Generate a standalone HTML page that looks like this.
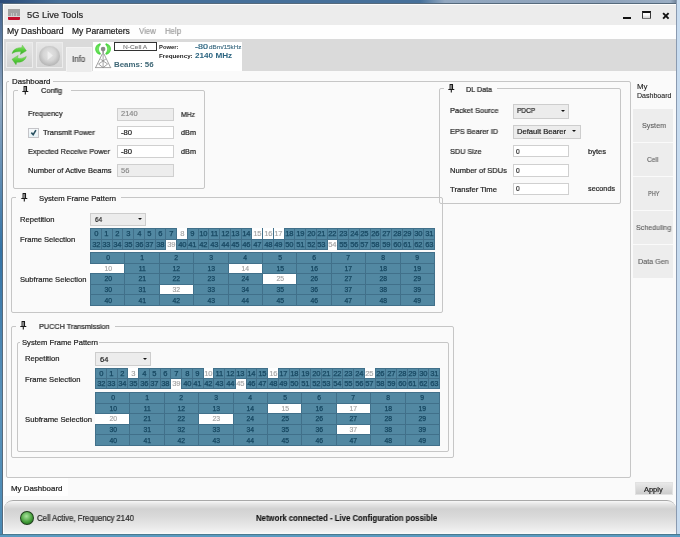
<!DOCTYPE html><html><head><meta charset="utf-8"><style>
*{margin:0;padding:0;box-sizing:border-box}
html,body{width:680px;height:537px;overflow:hidden;background:#2f6fa0;font-family:"Liberation Sans",sans-serif;color:#222}
.a{position:absolute}
.t{position:absolute;white-space:nowrap;line-height:1;transform-origin:0 0;will-change:transform}
.box{position:absolute;border:1px solid #c6c6c6;border-radius:2px}
.inp{position:absolute;border:1px solid #d0d0d0;background:#fff}
.dis{background:#ededed;border-color:#cfcfcf}
.dd{position:absolute;border:1px solid #cdcdcd;background:#ececec}
.arr{position:absolute;width:0;height:0;border-left:2.1px solid transparent;border-right:2.1px solid transparent;border-top:2.6px solid #111}
.g{position:absolute;background:#5288a2}
.gl{position:absolute;background:#41708a}
.w{position:absolute;background:#fff}
.gt{position:absolute;white-space:nowrap;line-height:1;text-align:center;color:#164862;will-change:transform;-webkit-text-stroke:0.25px #164862;transform-origin:50% 0}
.gt.wt{-webkit-text-stroke:0.15px #a0a0a0}
.pin{position:absolute}
</style></head><body>
<div class="a" style="left:0;top:0;width:680px;height:537px;background:linear-gradient(#3d5f8c 0px,#8fa8c2 100px,#3574a6 250px,#5a92ba 400px,#4a8ab5 537px)"></div>
<div class="a" style="left:0;top:0;width:680px;height:3px;background:linear-gradient(90deg,#2a4a78,#46709a 60px,#46709a 420px,#93a8c0 445px,#8ea2ba 600px,#9aaec4 670px,#5a6a80 680px)"></div>
<div class="a" style="left:676px;top:0;width:4px;height:537px;background:linear-gradient(90deg,#8a9ab0 0,#8a9ab0 1px,#c8dcf0 1px)"></div>
<div class="a" style="left:0;top:534px;width:680px;height:3px;background:linear-gradient(#4a7a90 0,#4a7a90 1px,#5a9ac0 1px)"></div>
<div class="a" style="left:2px;top:3px;width:674px;height:531px;background:#566a7c"></div>
<div class="a" style="left:3px;top:4px;width:673px;height:530px;background:#fdfdfd"></div>
<div class="a" style="left:4px;top:5px;width:672px;height:528px;background:#fafafa"></div>
<div class="a" style="left:4px;top:5px;width:672px;height:20px;background:#ececec"></div>
<div class="a" style="left:8.3px;top:9px;width:11.6px;height:8px;background:#a2a2a2"></div>
<div class="a" style="left:10.6px;top:12.5px;width:1px;height:3.5px;background:#c4c4c4"></div>
<div class="a" style="left:13.4px;top:12.5px;width:1px;height:3.5px;background:#c4c4c4"></div>
<div class="a" style="left:16.2px;top:12.5px;width:1px;height:3.5px;background:#c4c4c4"></div>
<div class="a" style="left:8.3px;top:15.8px;width:11.6px;height:1px;background:#d6d6d6"></div>
<div class="a" style="left:8.3px;top:17px;width:11.6px;height:3px;background:#c20f2c;border-radius:0 0 1px 1px"></div>
<div id="t0" class="t" style="left:27.10px;top:11.00px;font-size:8.72px;color:#2a2a2a;font-weight:normal;transform:scaleX(1.0661);-webkit-text-stroke:0.2px #2a2a2a;">5G Live Tools</div>
<div class="a" style="left:623px;top:17px;width:8px;height:2.3px;background:#111"></div>
<div class="a" style="left:642.2px;top:11.2px;width:8.6px;height:8.3px;border:1px solid #3a3a3a;border-top:2px solid #111;border-bottom-color:#777;border-radius:0 0 1px 1px;background:linear-gradient(#fafafa 40%,#d0d0d0)"></div>
<svg class="a" style="left:661.6px;top:11.8px" width="8" height="8" viewBox="0 0 8 8"><path d="M1.1 1.1L6.6 6.6M6.6 1.1L1.1 6.6" stroke="#111" stroke-width="1.9"/></svg>
<div class="a" style="left:4px;top:25px;width:672px;height:14px;background:#fefefe"></div>
<div id="t1" class="t" style="left:7.00px;top:27.00px;font-size:8.43px;color:#222;font-weight:normal;transform:scaleX(1.0348);-webkit-text-stroke:0.2px #222;">My Dashboard</div>
<div id="t2" class="t" style="left:72.40px;top:27.00px;font-size:8.43px;color:#222;font-weight:normal;transform:scaleX(1.0126);-webkit-text-stroke:0.2px #222;">My Parameters</div>
<div id="t3" class="t" style="left:138.80px;top:27.00px;font-size:8.43px;color:#9a9a9a;font-weight:normal;transform:scaleX(0.9306);-webkit-text-stroke:0.15px #9a9a9a;">View</div>
<div id="t4" class="t" style="left:164.70px;top:27.00px;font-size:8.43px;color:#9a9a9a;font-weight:normal;transform:scaleX(0.9242);-webkit-text-stroke:0.15px #9a9a9a;">Help</div>
<div class="a" style="left:4px;top:39px;width:672px;height:32px;background:#dadada"></div>
<div class="a" style="left:6px;top:42px;width:27px;height:26px;background:linear-gradient(#e6e6e6,#d2d2d2);border:1px solid #ececec"></div>
<svg class="a" style="left:10px;top:44px" width="20" height="22" viewBox="0 0 20 22">
<defs><linearGradient id="ga" x1="0" y1="0" x2="0" y2="1"><stop offset="0" stop-color="#9be87e"/><stop offset="0.5" stop-color="#56cc3a"/><stop offset="1" stop-color="#3aa82a"/></linearGradient></defs>
<path d="M2.1 9.6 C3 5.5 7 3.4 11.6 3.8 L12.4 1.2 L16.4 6.8 L10.2 10.6 L11 7.7 C7.5 7.3 4.5 8 2.1 9.6 Z" fill="url(#ga)" stroke="#4cb836" stroke-width="0.4"/>
<path d="M16.3 12.4 C15.4 16.5 11.4 18.6 6.8 18.2 L6 20.8 L2 15.2 L8.2 11.4 L7.4 14.3 C10.9 14.7 13.9 14 16.3 12.4 Z" fill="url(#ga)" stroke="#4cb836" stroke-width="0.4"/>
</svg>
<div class="a" style="left:36px;top:42px;width:27px;height:26px;background:linear-gradient(#e6e6e6,#d4d4d4);border:1px solid #ececec"></div>
<div class="a" style="left:39.3px;top:45.6px;width:20.6px;height:20.6px;border-radius:50%;background:radial-gradient(circle at 50% 42%,#e4e4e4 0%,#d6d6d6 40%,#b8b8b8 70%,#9e9e9e 86%,#bdbdbd 100%);box-shadow:0 0 0.8px #ccc"></div>
<svg class="a" style="left:47px;top:50px" width="7" height="11" viewBox="0 0 7 11"><path d="M0.6 1L5.9 5.5L0.6 10Z" fill="#efefef"/></svg>
<div class="a" style="left:66px;top:46.5px;width:26px;height:25px;background:#ececec;border:1px solid #f3f3f3;border-bottom:none"></div>
<div id="t5" class="t" style="left:72.40px;top:55.00px;font-size:8.43px;color:#3a3a3a;font-weight:normal;transform:scaleX(0.9468);-webkit-text-stroke:0.1px #3a3a3a;">Info</div>
<div class="a" style="left:93px;top:42px;width:149px;height:29px;background:#fff"></div>
<svg class="a" style="left:92px;top:41px" width="22" height="29" viewBox="0 0 22 29">
<defs><radialGradient id="gc" cx="0.5" cy="0.5" r="0.6"><stop offset="0" stop-color="#7ae86a"/><stop offset="1" stop-color="#3fcf35"/></radialGradient></defs>
<path d="M8 2.2 C1.6 4 1.6 12 8 13.8 C8.9 13.2 8.9 12.6 8.6 12.0 C6.5 10 6.5 6 8.6 4.0 C8.9 3.4 8.9 2.8 8 2.2 Z" fill="url(#gc)"/>
<path d="M 14.20 2.20 C 20.60 4.00 20.60 12.00 14.20 13.80 C 13.30 13.20 13.30 12.60 13.60 12.00 C 15.70 10.00 15.70 6.00 13.60 4.00 C 13.30 3.40 13.30 2.80 14.20 2.20 Z" fill="url(#gc)"/>
<circle cx="11.1" cy="8.1" r="2.3" fill="#8a8a8a"/>
<path d="M11.1 9 V13.5" stroke="#8a8a8a" stroke-width="1.4"/>
<path d="M10.2 13 L3.6 26.6 M12 13 L18.6 26.6 M3 26.6 H19.2 M11.1 13.5 V26.6 M8.3 18 L15.6 23 L11.1 26.6 L6.6 23 L13.9 18" stroke="#8c8c8c" stroke-width="0.8" fill="none"/>
</svg>
<div class="a" style="left:114px;top:42.4px;width:43px;height:8.5px;border:1px solid #333;background:#fff"></div>
<div id="t6" class="t" style="left:123.00px;top:45.00px;font-size:5.52px;color:#777;font-weight:normal;transform:scaleX(1.1988);-webkit-text-stroke:0.1px #777;">N-Cell A</div>
<div id="t7" class="t" style="left:159.00px;top:45.00px;font-size:5.23px;color:#222;font-weight:bold;transform:scaleX(1.1211);">Power:</div>
<div id="t8" class="t" style="left:194.70px;top:44.00px;font-size:6.69px;color:#2d6682;font-weight:normal;transform:scaleX(1.3391);-webkit-text-stroke:0.2px #2d6682;">-80</div>
<div id="t9" class="t" style="left:208.50px;top:46.00px;font-size:4.80px;color:#3b6a80;font-weight:normal;transform:scaleX(1.3072);-webkit-text-stroke:0.1px #3b6a80;">dBm/15kHz</div>
<div id="t10" class="t" style="left:159.00px;top:53.00px;font-size:6.25px;color:#222;font-weight:bold;transform:scaleX(0.9909);">Frequency:</div>
<div id="t11" class="t" style="left:195.30px;top:53.00px;font-size:7.12px;color:#2d6682;font-weight:bold;transform:scaleX(1.1477);">2140 MHz</div>
<div id="t12" class="t" style="left:114.00px;top:61.00px;font-size:7.27px;color:#3d6675;font-weight:bold;transform:scaleX(1.0900);">Beams: 56</div>
<div class="box" style="left:6px;top:81px;width:625px;height:397px"></div>
<div class="a" style="left:9px;top:76px;width:44px;height:9px;background:#fafafa"></div>
<div id="t13" class="t" style="left:11.70px;top:78.00px;font-size:7.27px;color:#222;font-weight:normal;transform:scaleX(1.0808);-webkit-text-stroke:0.2px #222;">Dashboard</div>
<div class="box" style="left:13px;top:90px;width:192px;height:99px"></div>
<div class="a" style="left:18px;top:88px;width:53px;height:5px;background:#fafafa"></div>
<svg class="a" style="left:22px;top:86px" width="7" height="10" viewBox="0 0 7 10"><path d="M1.6 0.6H5.0M2.1 0.6V5.2M4.5 0.6V5.2M0.3 5.5H6.3M3.3 5.5V8.6" stroke="#1a1a1a" stroke-width="1.1" fill="none"/><rect x="2.6" y="1" width="1.4" height="4" fill="#888"/></svg>
<div id="t14" class="t" style="left:41.00px;top:87.00px;font-size:7.56px;color:#222;font-weight:normal;transform:scaleX(0.9714);-webkit-text-stroke:0.2px #222;">Config</div>
<div id="t15" class="t" style="left:27.70px;top:110.00px;font-size:7.56px;color:#222;font-weight:normal;transform:scaleX(0.9670);-webkit-text-stroke:0.2px #222;">Frequency</div>
<div class="a" style="left:28.2px;top:127.5px;width:10.6px;height:10.6px;border:1px solid #c4c4c8;background:linear-gradient(#f6f8fa,#e6f2f6)"></div>
<svg class="a" style="left:29px;top:128px" width="10" height="10" viewBox="0 0 10 10"><path d="M2.3 4.6L4.2 6.6L6.9 2.1" stroke="#2a5262" stroke-width="1.6" fill="none"/></svg>
<div id="t16" class="t" style="left:43.40px;top:129.00px;font-size:7.56px;color:#222;font-weight:normal;transform:scaleX(0.9878);-webkit-text-stroke:0.2px #222;">Transmit Power</div>
<div id="t17" class="t" style="left:27.80px;top:148.00px;font-size:7.56px;color:#222;font-weight:normal;transform:scaleX(0.9728);-webkit-text-stroke:0.2px #222;">Expected Receive Power</div>
<div id="t18" class="t" style="left:27.80px;top:167.00px;font-size:7.56px;color:#222;font-weight:normal;transform:scaleX(1.0061);-webkit-text-stroke:0.2px #222;">Number of Active Beams</div>
<div class="inp dis" style="left:117.4px;top:108px;width:57px;height:12.7px"></div>
<div class="inp" style="left:117.4px;top:126.3px;width:57px;height:13px"></div>
<div class="inp" style="left:117.4px;top:145.3px;width:57px;height:12.5px"></div>
<div class="inp dis" style="left:117.4px;top:164px;width:57px;height:12.5px"></div>
<div id="t19" class="t" style="left:120.80px;top:110.00px;font-size:7.00px;color:#888;font-weight:normal;transform:scaleX(1.0651);-webkit-text-stroke:0.15px #888;">2140</div>
<div id="t20" class="t" style="left:120.80px;top:129.00px;font-size:7.00px;color:#222;font-weight:normal;transform:scaleX(1.0954);-webkit-text-stroke:0.2px #222;">-80</div>
<div id="t21" class="t" style="left:120.80px;top:148.00px;font-size:7.00px;color:#222;font-weight:normal;transform:scaleX(1.0954);-webkit-text-stroke:0.2px #222;">-80</div>
<div id="t22" class="t" style="left:120.80px;top:167.00px;font-size:7.00px;color:#888;font-weight:normal;transform:scaleX(1.0769);-webkit-text-stroke:0.15px #888;">56</div>
<div id="t23" class="t" style="left:181.30px;top:111.00px;font-size:7.27px;color:#222;font-weight:normal;transform:scaleX(0.9427);-webkit-text-stroke:0.2px #222;">MHz</div>
<div id="t24" class="t" style="left:181.30px;top:129.00px;font-size:7.27px;color:#222;font-weight:normal;transform:scaleX(1.0022);-webkit-text-stroke:0.2px #222;">dBm</div>
<div id="t25" class="t" style="left:181.30px;top:148.00px;font-size:7.27px;color:#222;font-weight:normal;transform:scaleX(1.0022);-webkit-text-stroke:0.2px #222;">dBm</div>
<div class="box" style="left:439px;top:88px;width:182px;height:116px"></div>
<div class="a" style="left:444px;top:86px;width:53px;height:5px;background:#fafafa"></div>
<svg class="a" style="left:448px;top:84px" width="7" height="10" viewBox="0 0 7 10"><path d="M1.6 0.6H5.0M2.1 0.6V5.2M4.5 0.6V5.2M0.3 5.5H6.3M3.3 5.5V8.6" stroke="#1a1a1a" stroke-width="1.1" fill="none"/><rect x="2.6" y="1" width="1.4" height="4" fill="#888"/></svg>
<div id="t26" class="t" style="left:465.80px;top:86.00px;font-size:7.27px;color:#222;font-weight:normal;transform:scaleX(0.9868);-webkit-text-stroke:0.2px #222;">DL Data</div>
<div id="t27" class="t" style="left:449.90px;top:107.00px;font-size:7.56px;color:#222;font-weight:normal;transform:scaleX(0.9881);-webkit-text-stroke:0.2px #222;">Packet Source</div>
<div id="t28" class="t" style="left:449.90px;top:128.00px;font-size:7.56px;color:#222;font-weight:normal;transform:scaleX(0.9712);-webkit-text-stroke:0.2px #222;">EPS Bearer ID</div>
<div id="t29" class="t" style="left:449.90px;top:148.00px;font-size:7.56px;color:#222;font-weight:normal;transform:scaleX(0.9688);-webkit-text-stroke:0.2px #222;">SDU Size</div>
<div id="t30" class="t" style="left:449.90px;top:167.00px;font-size:7.56px;color:#222;font-weight:normal;transform:scaleX(0.9972);-webkit-text-stroke:0.2px #222;">Number of SDUs</div>
<div id="t31" class="t" style="left:449.90px;top:186.00px;font-size:7.56px;color:#222;font-weight:normal;transform:scaleX(1.0150);-webkit-text-stroke:0.2px #222;">Transfer Time</div>
<div class="dd" style="left:513.3px;top:104.1px;width:55.3px;height:14.5px"></div>
<div id="t32" class="t" style="left:516.90px;top:107.00px;font-size:7.27px;color:#222;font-weight:normal;transform:scaleX(0.9061);-webkit-text-stroke:0.2px #222;">PDCP</div>
<div class="arr" style="left:560.6px;top:109.6px"></div>
<div class="dd" style="left:513.3px;top:124.7px;width:67.3px;height:14.5px"></div>
<div id="t33" class="t" style="left:516.90px;top:128.00px;font-size:7.27px;color:#222;font-weight:normal;transform:scaleX(1.0479);-webkit-text-stroke:0.2px #222;">Default Bearer</div>
<div class="arr" style="left:572.4px;top:130.4px"></div>
<div class="inp" style="left:512.6px;top:145.2px;width:56px;height:12.3px"></div>
<div class="inp" style="left:512.6px;top:164.3px;width:56px;height:12.3px"></div>
<div class="inp" style="left:512.6px;top:182.5px;width:56px;height:12.9px"></div>
<div id="t34" class="t" style="left:516.40px;top:148.00px;font-size:7.00px;color:#222;font-weight:normal;transform:scaleX(0.9000);-webkit-text-stroke:0.2px #222;">0</div>
<div id="t35" class="t" style="left:516.40px;top:167.00px;font-size:7.00px;color:#222;font-weight:normal;transform:scaleX(0.9000);-webkit-text-stroke:0.2px #222;">0</div>
<div id="t36" class="t" style="left:516.40px;top:185.00px;font-size:7.00px;color:#222;font-weight:normal;transform:scaleX(0.9000);-webkit-text-stroke:0.2px #222;">0</div>
<div id="t37" class="t" style="left:588.00px;top:148.00px;font-size:7.27px;color:#222;font-weight:normal;transform:scaleX(1.0393);-webkit-text-stroke:0.2px #222;">bytes</div>
<div id="t38" class="t" style="left:588.00px;top:185.00px;font-size:7.27px;color:#222;font-weight:normal;transform:scaleX(0.9935);-webkit-text-stroke:0.2px #222;">seconds</div>
<div class="box" style="left:11px;top:197px;width:432px;height:116px"></div>
<div class="a" style="left:16px;top:195px;width:105px;height:5px;background:#fafafa"></div>
<svg class="a" style="left:21px;top:193px" width="7" height="10" viewBox="0 0 7 10"><path d="M1.6 0.6H5.0M2.1 0.6V5.2M4.5 0.6V5.2M0.3 5.5H6.3M3.3 5.5V8.6" stroke="#1a1a1a" stroke-width="1.1" fill="none"/><rect x="2.6" y="1" width="1.4" height="4" fill="#888"/></svg>
<div id="t39" class="t" style="left:38.70px;top:195.00px;font-size:7.56px;color:#222;font-weight:normal;transform:scaleX(1.0200);-webkit-text-stroke:0.2px #222;">System Frame Pattern</div>
<div id="t40" class="t" style="left:20.00px;top:216.00px;font-size:7.56px;color:#222;font-weight:normal;transform:scaleX(1.0123);-webkit-text-stroke:0.2px #222;">Repetition</div>
<div class="dd" style="left:89.9px;top:212.5px;width:56px;height:13.6px"></div>
<div id="t41" class="t" style="left:94.90px;top:216.00px;font-size:7.71px;color:#222;font-weight:normal;transform:scaleX(0.8294);-webkit-text-stroke:0.2px #222;">64</div>
<div class="arr" style="left:137.9px;top:218.0px"></div>
<div id="t42" class="t" style="left:20.00px;top:236.00px;font-size:7.56px;color:#222;font-weight:normal;transform:scaleX(1.0064);-webkit-text-stroke:0.2px #222;">Frame Selection</div>
<div id="t43" class="t" style="left:20.00px;top:276.00px;font-size:7.56px;color:#222;font-weight:normal;transform:scaleX(1.0081);-webkit-text-stroke:0.2px #222;">Subframe Selection</div>
<div class="gl" style="left:90px;top:228px;width:345px;height:22px"></div>
<div class="g" style="left:91.00px;top:229.00px;width:9.75px;height:9.50px"></div>
<div class="g" style="left:101.75px;top:229.00px;width:9.75px;height:9.50px"></div>
<div class="g" style="left:112.50px;top:229.00px;width:9.75px;height:9.50px"></div>
<div class="g" style="left:123.25px;top:229.00px;width:9.75px;height:9.50px"></div>
<div class="g" style="left:134.00px;top:229.00px;width:9.75px;height:9.50px"></div>
<div class="g" style="left:144.75px;top:229.00px;width:9.75px;height:9.50px"></div>
<div class="g" style="left:155.50px;top:229.00px;width:9.75px;height:9.50px"></div>
<div class="g" style="left:166.25px;top:229.00px;width:9.75px;height:9.50px"></div>
<div class="w" style="left:177.00px;top:228.00px;width:9.75px;height:10.50px"></div>
<div class="g" style="left:187.75px;top:229.00px;width:9.75px;height:9.50px"></div>
<div class="g" style="left:198.50px;top:229.00px;width:9.75px;height:9.50px"></div>
<div class="g" style="left:209.25px;top:229.00px;width:9.75px;height:9.50px"></div>
<div class="g" style="left:220.00px;top:229.00px;width:9.75px;height:9.50px"></div>
<div class="g" style="left:230.75px;top:229.00px;width:9.75px;height:9.50px"></div>
<div class="g" style="left:241.50px;top:229.00px;width:9.75px;height:9.50px"></div>
<div class="w" style="left:252.25px;top:228.00px;width:9.75px;height:10.50px"></div>
<div class="w" style="left:263.00px;top:228.00px;width:9.75px;height:10.50px"></div>
<div class="w" style="left:273.75px;top:228.00px;width:9.75px;height:10.50px"></div>
<div class="g" style="left:284.50px;top:229.00px;width:9.75px;height:9.50px"></div>
<div class="g" style="left:295.25px;top:229.00px;width:9.75px;height:9.50px"></div>
<div class="g" style="left:306.00px;top:229.00px;width:9.75px;height:9.50px"></div>
<div class="g" style="left:316.75px;top:229.00px;width:9.75px;height:9.50px"></div>
<div class="g" style="left:327.50px;top:229.00px;width:9.75px;height:9.50px"></div>
<div class="g" style="left:338.25px;top:229.00px;width:9.75px;height:9.50px"></div>
<div class="g" style="left:349.00px;top:229.00px;width:9.75px;height:9.50px"></div>
<div class="g" style="left:359.75px;top:229.00px;width:9.75px;height:9.50px"></div>
<div class="g" style="left:370.50px;top:229.00px;width:9.75px;height:9.50px"></div>
<div class="g" style="left:381.25px;top:229.00px;width:9.75px;height:9.50px"></div>
<div class="g" style="left:392.00px;top:229.00px;width:9.75px;height:9.50px"></div>
<div class="g" style="left:402.75px;top:229.00px;width:9.75px;height:9.50px"></div>
<div class="g" style="left:413.50px;top:229.00px;width:9.75px;height:9.50px"></div>
<div class="g" style="left:424.25px;top:229.00px;width:9.75px;height:9.50px"></div>
<div class="g" style="left:91.00px;top:239.50px;width:9.75px;height:9.50px"></div>
<div class="g" style="left:101.75px;top:239.50px;width:9.75px;height:9.50px"></div>
<div class="g" style="left:112.50px;top:239.50px;width:9.75px;height:9.50px"></div>
<div class="g" style="left:123.25px;top:239.50px;width:9.75px;height:9.50px"></div>
<div class="g" style="left:134.00px;top:239.50px;width:9.75px;height:9.50px"></div>
<div class="g" style="left:144.75px;top:239.50px;width:9.75px;height:9.50px"></div>
<div class="g" style="left:155.50px;top:239.50px;width:9.75px;height:9.50px"></div>
<div class="w" style="left:166.25px;top:239.50px;width:9.75px;height:10.50px"></div>
<div class="g" style="left:177.00px;top:239.50px;width:9.75px;height:9.50px"></div>
<div class="g" style="left:187.75px;top:239.50px;width:9.75px;height:9.50px"></div>
<div class="g" style="left:198.50px;top:239.50px;width:9.75px;height:9.50px"></div>
<div class="g" style="left:209.25px;top:239.50px;width:9.75px;height:9.50px"></div>
<div class="g" style="left:220.00px;top:239.50px;width:9.75px;height:9.50px"></div>
<div class="g" style="left:230.75px;top:239.50px;width:9.75px;height:9.50px"></div>
<div class="g" style="left:241.50px;top:239.50px;width:9.75px;height:9.50px"></div>
<div class="g" style="left:252.25px;top:239.50px;width:9.75px;height:9.50px"></div>
<div class="g" style="left:263.00px;top:239.50px;width:9.75px;height:9.50px"></div>
<div class="g" style="left:273.75px;top:239.50px;width:9.75px;height:9.50px"></div>
<div class="g" style="left:284.50px;top:239.50px;width:9.75px;height:9.50px"></div>
<div class="g" style="left:295.25px;top:239.50px;width:9.75px;height:9.50px"></div>
<div class="g" style="left:306.00px;top:239.50px;width:9.75px;height:9.50px"></div>
<div class="g" style="left:316.75px;top:239.50px;width:9.75px;height:9.50px"></div>
<div class="w" style="left:327.50px;top:239.50px;width:9.75px;height:10.50px"></div>
<div class="g" style="left:338.25px;top:239.50px;width:9.75px;height:9.50px"></div>
<div class="g" style="left:349.00px;top:239.50px;width:9.75px;height:9.50px"></div>
<div class="g" style="left:359.75px;top:239.50px;width:9.75px;height:9.50px"></div>
<div class="g" style="left:370.50px;top:239.50px;width:9.75px;height:9.50px"></div>
<div class="g" style="left:381.25px;top:239.50px;width:9.75px;height:9.50px"></div>
<div class="g" style="left:392.00px;top:239.50px;width:9.75px;height:9.50px"></div>
<div class="g" style="left:402.75px;top:239.50px;width:9.75px;height:9.50px"></div>
<div class="g" style="left:413.50px;top:239.50px;width:9.75px;height:9.50px"></div>
<div class="g" style="left:424.25px;top:239.50px;width:9.75px;height:9.50px"></div>
<div class="gt" style="left:90.50px;top:230px;width:10.75px;font-size:7.6px;color:#123f58;transform:scaleX(0.97)">0</div>
<div class="gt" style="left:101.25px;top:230px;width:10.75px;font-size:7.6px;color:#123f58;transform:scaleX(0.97)">1</div>
<div class="gt" style="left:112.00px;top:230px;width:10.75px;font-size:7.6px;color:#123f58;transform:scaleX(0.97)">2</div>
<div class="gt" style="left:122.75px;top:230px;width:10.75px;font-size:7.6px;color:#123f58;transform:scaleX(0.97)">3</div>
<div class="gt" style="left:133.50px;top:230px;width:10.75px;font-size:7.6px;color:#123f58;transform:scaleX(0.97)">4</div>
<div class="gt" style="left:144.25px;top:230px;width:10.75px;font-size:7.6px;color:#123f58;transform:scaleX(0.97)">5</div>
<div class="gt" style="left:155.00px;top:230px;width:10.75px;font-size:7.6px;color:#123f58;transform:scaleX(0.97)">6</div>
<div class="gt" style="left:165.75px;top:230px;width:10.75px;font-size:7.6px;color:#123f58;transform:scaleX(0.97)">7</div>
<div class="gt wt" style="left:176.50px;top:230px;width:10.75px;font-size:7.6px;color:#a0a0a0;transform:scaleX(0.97)">8</div>
<div class="gt" style="left:187.25px;top:230px;width:10.75px;font-size:7.6px;color:#123f58;transform:scaleX(0.97)">9</div>
<div class="gt" style="left:198.00px;top:230px;width:10.75px;font-size:7.6px;color:#123f58;transform:scaleX(0.97)">10</div>
<div class="gt" style="left:208.75px;top:230px;width:10.75px;font-size:7.6px;color:#123f58;transform:scaleX(0.97)">11</div>
<div class="gt" style="left:219.50px;top:230px;width:10.75px;font-size:7.6px;color:#123f58;transform:scaleX(0.97)">12</div>
<div class="gt" style="left:230.25px;top:230px;width:10.75px;font-size:7.6px;color:#123f58;transform:scaleX(0.97)">13</div>
<div class="gt" style="left:241.00px;top:230px;width:10.75px;font-size:7.6px;color:#123f58;transform:scaleX(0.97)">14</div>
<div class="gt wt" style="left:251.75px;top:230px;width:10.75px;font-size:7.6px;color:#a0a0a0;transform:scaleX(0.97)">15</div>
<div class="gt wt" style="left:262.50px;top:230px;width:10.75px;font-size:7.6px;color:#a0a0a0;transform:scaleX(0.97)">16</div>
<div class="gt wt" style="left:273.25px;top:230px;width:10.75px;font-size:7.6px;color:#a0a0a0;transform:scaleX(0.97)">17</div>
<div class="gt" style="left:284.00px;top:230px;width:10.75px;font-size:7.6px;color:#123f58;transform:scaleX(0.97)">18</div>
<div class="gt" style="left:294.75px;top:230px;width:10.75px;font-size:7.6px;color:#123f58;transform:scaleX(0.97)">19</div>
<div class="gt" style="left:305.50px;top:230px;width:10.75px;font-size:7.6px;color:#123f58;transform:scaleX(0.97)">20</div>
<div class="gt" style="left:316.25px;top:230px;width:10.75px;font-size:7.6px;color:#123f58;transform:scaleX(0.97)">21</div>
<div class="gt" style="left:327.00px;top:230px;width:10.75px;font-size:7.6px;color:#123f58;transform:scaleX(0.97)">22</div>
<div class="gt" style="left:337.75px;top:230px;width:10.75px;font-size:7.6px;color:#123f58;transform:scaleX(0.97)">23</div>
<div class="gt" style="left:348.50px;top:230px;width:10.75px;font-size:7.6px;color:#123f58;transform:scaleX(0.97)">24</div>
<div class="gt" style="left:359.25px;top:230px;width:10.75px;font-size:7.6px;color:#123f58;transform:scaleX(0.97)">25</div>
<div class="gt" style="left:370.00px;top:230px;width:10.75px;font-size:7.6px;color:#123f58;transform:scaleX(0.97)">26</div>
<div class="gt" style="left:380.75px;top:230px;width:10.75px;font-size:7.6px;color:#123f58;transform:scaleX(0.97)">27</div>
<div class="gt" style="left:391.50px;top:230px;width:10.75px;font-size:7.6px;color:#123f58;transform:scaleX(0.97)">28</div>
<div class="gt" style="left:402.25px;top:230px;width:10.75px;font-size:7.6px;color:#123f58;transform:scaleX(0.97)">29</div>
<div class="gt" style="left:413.00px;top:230px;width:10.75px;font-size:7.6px;color:#123f58;transform:scaleX(0.97)">30</div>
<div class="gt" style="left:423.75px;top:230px;width:10.75px;font-size:7.6px;color:#123f58;transform:scaleX(0.97)">31</div>
<div class="gt" style="left:90.50px;top:241px;width:10.75px;font-size:7.6px;color:#123f58;transform:scaleX(0.97)">32</div>
<div class="gt" style="left:101.25px;top:241px;width:10.75px;font-size:7.6px;color:#123f58;transform:scaleX(0.97)">33</div>
<div class="gt" style="left:112.00px;top:241px;width:10.75px;font-size:7.6px;color:#123f58;transform:scaleX(0.97)">34</div>
<div class="gt" style="left:122.75px;top:241px;width:10.75px;font-size:7.6px;color:#123f58;transform:scaleX(0.97)">35</div>
<div class="gt" style="left:133.50px;top:241px;width:10.75px;font-size:7.6px;color:#123f58;transform:scaleX(0.97)">36</div>
<div class="gt" style="left:144.25px;top:241px;width:10.75px;font-size:7.6px;color:#123f58;transform:scaleX(0.97)">37</div>
<div class="gt" style="left:155.00px;top:241px;width:10.75px;font-size:7.6px;color:#123f58;transform:scaleX(0.97)">38</div>
<div class="gt wt" style="left:165.75px;top:241px;width:10.75px;font-size:7.6px;color:#a0a0a0;transform:scaleX(0.97)">39</div>
<div class="gt" style="left:176.50px;top:241px;width:10.75px;font-size:7.6px;color:#123f58;transform:scaleX(0.97)">40</div>
<div class="gt" style="left:187.25px;top:241px;width:10.75px;font-size:7.6px;color:#123f58;transform:scaleX(0.97)">41</div>
<div class="gt" style="left:198.00px;top:241px;width:10.75px;font-size:7.6px;color:#123f58;transform:scaleX(0.97)">42</div>
<div class="gt" style="left:208.75px;top:241px;width:10.75px;font-size:7.6px;color:#123f58;transform:scaleX(0.97)">43</div>
<div class="gt" style="left:219.50px;top:241px;width:10.75px;font-size:7.6px;color:#123f58;transform:scaleX(0.97)">44</div>
<div class="gt" style="left:230.25px;top:241px;width:10.75px;font-size:7.6px;color:#123f58;transform:scaleX(0.97)">45</div>
<div class="gt" style="left:241.00px;top:241px;width:10.75px;font-size:7.6px;color:#123f58;transform:scaleX(0.97)">46</div>
<div class="gt" style="left:251.75px;top:241px;width:10.75px;font-size:7.6px;color:#123f58;transform:scaleX(0.97)">47</div>
<div class="gt" style="left:262.50px;top:241px;width:10.75px;font-size:7.6px;color:#123f58;transform:scaleX(0.97)">48</div>
<div class="gt" style="left:273.25px;top:241px;width:10.75px;font-size:7.6px;color:#123f58;transform:scaleX(0.97)">49</div>
<div class="gt" style="left:284.00px;top:241px;width:10.75px;font-size:7.6px;color:#123f58;transform:scaleX(0.97)">50</div>
<div class="gt" style="left:294.75px;top:241px;width:10.75px;font-size:7.6px;color:#123f58;transform:scaleX(0.97)">51</div>
<div class="gt" style="left:305.50px;top:241px;width:10.75px;font-size:7.6px;color:#123f58;transform:scaleX(0.97)">52</div>
<div class="gt" style="left:316.25px;top:241px;width:10.75px;font-size:7.6px;color:#123f58;transform:scaleX(0.97)">53</div>
<div class="gt wt" style="left:327.00px;top:241px;width:10.75px;font-size:7.6px;color:#a0a0a0;transform:scaleX(0.97)">54</div>
<div class="gt" style="left:337.75px;top:241px;width:10.75px;font-size:7.6px;color:#123f58;transform:scaleX(0.97)">55</div>
<div class="gt" style="left:348.50px;top:241px;width:10.75px;font-size:7.6px;color:#123f58;transform:scaleX(0.97)">56</div>
<div class="gt" style="left:359.25px;top:241px;width:10.75px;font-size:7.6px;color:#123f58;transform:scaleX(0.97)">57</div>
<div class="gt" style="left:370.00px;top:241px;width:10.75px;font-size:7.6px;color:#123f58;transform:scaleX(0.97)">58</div>
<div class="gt" style="left:380.75px;top:241px;width:10.75px;font-size:7.6px;color:#123f58;transform:scaleX(0.97)">59</div>
<div class="gt" style="left:391.50px;top:241px;width:10.75px;font-size:7.6px;color:#123f58;transform:scaleX(0.97)">60</div>
<div class="gt" style="left:402.25px;top:241px;width:10.75px;font-size:7.6px;color:#123f58;transform:scaleX(0.97)">61</div>
<div class="gt" style="left:413.00px;top:241px;width:10.75px;font-size:7.6px;color:#123f58;transform:scaleX(0.97)">62</div>
<div class="gt" style="left:423.75px;top:241px;width:10.75px;font-size:7.6px;color:#123f58;transform:scaleX(0.97)">63</div>
<div class="gl" style="left:90px;top:252px;width:345px;height:54px"></div>
<div class="g" style="left:91.00px;top:253.00px;width:33.40px;height:9.60px"></div>
<div class="g" style="left:125.40px;top:253.00px;width:33.40px;height:9.60px"></div>
<div class="g" style="left:159.80px;top:253.00px;width:33.40px;height:9.60px"></div>
<div class="g" style="left:194.20px;top:253.00px;width:33.40px;height:9.60px"></div>
<div class="g" style="left:228.60px;top:253.00px;width:33.40px;height:9.60px"></div>
<div class="g" style="left:263.00px;top:253.00px;width:33.40px;height:9.60px"></div>
<div class="g" style="left:297.40px;top:253.00px;width:33.40px;height:9.60px"></div>
<div class="g" style="left:331.80px;top:253.00px;width:33.40px;height:9.60px"></div>
<div class="g" style="left:366.20px;top:253.00px;width:33.40px;height:9.60px"></div>
<div class="g" style="left:400.60px;top:253.00px;width:33.40px;height:9.60px"></div>
<div class="w" style="left:90.00px;top:263.60px;width:34.40px;height:9.60px"></div>
<div class="g" style="left:125.40px;top:263.60px;width:33.40px;height:9.60px"></div>
<div class="g" style="left:159.80px;top:263.60px;width:33.40px;height:9.60px"></div>
<div class="g" style="left:194.20px;top:263.60px;width:33.40px;height:9.60px"></div>
<div class="w" style="left:228.60px;top:263.60px;width:33.40px;height:9.60px"></div>
<div class="g" style="left:263.00px;top:263.60px;width:33.40px;height:9.60px"></div>
<div class="g" style="left:297.40px;top:263.60px;width:33.40px;height:9.60px"></div>
<div class="g" style="left:331.80px;top:263.60px;width:33.40px;height:9.60px"></div>
<div class="g" style="left:366.20px;top:263.60px;width:33.40px;height:9.60px"></div>
<div class="g" style="left:400.60px;top:263.60px;width:33.40px;height:9.60px"></div>
<div class="g" style="left:91.00px;top:274.20px;width:33.40px;height:9.60px"></div>
<div class="g" style="left:125.40px;top:274.20px;width:33.40px;height:9.60px"></div>
<div class="g" style="left:159.80px;top:274.20px;width:33.40px;height:9.60px"></div>
<div class="g" style="left:194.20px;top:274.20px;width:33.40px;height:9.60px"></div>
<div class="g" style="left:228.60px;top:274.20px;width:33.40px;height:9.60px"></div>
<div class="w" style="left:263.00px;top:274.20px;width:33.40px;height:9.60px"></div>
<div class="g" style="left:297.40px;top:274.20px;width:33.40px;height:9.60px"></div>
<div class="g" style="left:331.80px;top:274.20px;width:33.40px;height:9.60px"></div>
<div class="g" style="left:366.20px;top:274.20px;width:33.40px;height:9.60px"></div>
<div class="g" style="left:400.60px;top:274.20px;width:33.40px;height:9.60px"></div>
<div class="g" style="left:91.00px;top:284.80px;width:33.40px;height:9.60px"></div>
<div class="g" style="left:125.40px;top:284.80px;width:33.40px;height:9.60px"></div>
<div class="w" style="left:159.80px;top:284.80px;width:33.40px;height:9.60px"></div>
<div class="g" style="left:194.20px;top:284.80px;width:33.40px;height:9.60px"></div>
<div class="g" style="left:228.60px;top:284.80px;width:33.40px;height:9.60px"></div>
<div class="g" style="left:263.00px;top:284.80px;width:33.40px;height:9.60px"></div>
<div class="g" style="left:297.40px;top:284.80px;width:33.40px;height:9.60px"></div>
<div class="g" style="left:331.80px;top:284.80px;width:33.40px;height:9.60px"></div>
<div class="g" style="left:366.20px;top:284.80px;width:33.40px;height:9.60px"></div>
<div class="g" style="left:400.60px;top:284.80px;width:33.40px;height:9.60px"></div>
<div class="g" style="left:91.00px;top:295.40px;width:33.40px;height:9.60px"></div>
<div class="g" style="left:125.40px;top:295.40px;width:33.40px;height:9.60px"></div>
<div class="g" style="left:159.80px;top:295.40px;width:33.40px;height:9.60px"></div>
<div class="g" style="left:194.20px;top:295.40px;width:33.40px;height:9.60px"></div>
<div class="g" style="left:228.60px;top:295.40px;width:33.40px;height:9.60px"></div>
<div class="g" style="left:263.00px;top:295.40px;width:33.40px;height:9.60px"></div>
<div class="g" style="left:297.40px;top:295.40px;width:33.40px;height:9.60px"></div>
<div class="g" style="left:331.80px;top:295.40px;width:33.40px;height:9.60px"></div>
<div class="g" style="left:366.20px;top:295.40px;width:33.40px;height:9.60px"></div>
<div class="g" style="left:400.60px;top:295.40px;width:33.40px;height:9.60px"></div>
<div class="gt" style="left:90.50px;top:255px;width:34.40px;font-size:6.8px;color:#123f58;transform:scaleX(1.0)">0</div>
<div class="gt" style="left:124.90px;top:255px;width:34.40px;font-size:6.8px;color:#123f58;transform:scaleX(1.0)">1</div>
<div class="gt" style="left:159.30px;top:255px;width:34.40px;font-size:6.8px;color:#123f58;transform:scaleX(1.0)">2</div>
<div class="gt" style="left:193.70px;top:255px;width:34.40px;font-size:6.8px;color:#123f58;transform:scaleX(1.0)">3</div>
<div class="gt" style="left:228.10px;top:255px;width:34.40px;font-size:6.8px;color:#123f58;transform:scaleX(1.0)">4</div>
<div class="gt" style="left:262.50px;top:255px;width:34.40px;font-size:6.8px;color:#123f58;transform:scaleX(1.0)">5</div>
<div class="gt" style="left:296.90px;top:255px;width:34.40px;font-size:6.8px;color:#123f58;transform:scaleX(1.0)">6</div>
<div class="gt" style="left:331.30px;top:255px;width:34.40px;font-size:6.8px;color:#123f58;transform:scaleX(1.0)">7</div>
<div class="gt" style="left:365.70px;top:255px;width:34.40px;font-size:6.8px;color:#123f58;transform:scaleX(1.0)">8</div>
<div class="gt" style="left:400.10px;top:255px;width:34.40px;font-size:6.8px;color:#123f58;transform:scaleX(1.0)">9</div>
<div class="gt wt" style="left:90.50px;top:266px;width:34.40px;font-size:6.8px;color:#a0a0a0;transform:scaleX(1.0)">10</div>
<div class="gt" style="left:124.90px;top:266px;width:34.40px;font-size:6.8px;color:#123f58;transform:scaleX(1.0)">11</div>
<div class="gt" style="left:159.30px;top:266px;width:34.40px;font-size:6.8px;color:#123f58;transform:scaleX(1.0)">12</div>
<div class="gt" style="left:193.70px;top:266px;width:34.40px;font-size:6.8px;color:#123f58;transform:scaleX(1.0)">13</div>
<div class="gt wt" style="left:228.10px;top:266px;width:34.40px;font-size:6.8px;color:#a0a0a0;transform:scaleX(1.0)">14</div>
<div class="gt" style="left:262.50px;top:266px;width:34.40px;font-size:6.8px;color:#123f58;transform:scaleX(1.0)">15</div>
<div class="gt" style="left:296.90px;top:266px;width:34.40px;font-size:6.8px;color:#123f58;transform:scaleX(1.0)">16</div>
<div class="gt" style="left:331.30px;top:266px;width:34.40px;font-size:6.8px;color:#123f58;transform:scaleX(1.0)">17</div>
<div class="gt" style="left:365.70px;top:266px;width:34.40px;font-size:6.8px;color:#123f58;transform:scaleX(1.0)">18</div>
<div class="gt" style="left:400.10px;top:266px;width:34.40px;font-size:6.8px;color:#123f58;transform:scaleX(1.0)">19</div>
<div class="gt" style="left:90.50px;top:276px;width:34.40px;font-size:6.8px;color:#123f58;transform:scaleX(1.0)">20</div>
<div class="gt" style="left:124.90px;top:276px;width:34.40px;font-size:6.8px;color:#123f58;transform:scaleX(1.0)">21</div>
<div class="gt" style="left:159.30px;top:276px;width:34.40px;font-size:6.8px;color:#123f58;transform:scaleX(1.0)">22</div>
<div class="gt" style="left:193.70px;top:276px;width:34.40px;font-size:6.8px;color:#123f58;transform:scaleX(1.0)">23</div>
<div class="gt" style="left:228.10px;top:276px;width:34.40px;font-size:6.8px;color:#123f58;transform:scaleX(1.0)">24</div>
<div class="gt wt" style="left:262.50px;top:276px;width:34.40px;font-size:6.8px;color:#a0a0a0;transform:scaleX(1.0)">25</div>
<div class="gt" style="left:296.90px;top:276px;width:34.40px;font-size:6.8px;color:#123f58;transform:scaleX(1.0)">26</div>
<div class="gt" style="left:331.30px;top:276px;width:34.40px;font-size:6.8px;color:#123f58;transform:scaleX(1.0)">27</div>
<div class="gt" style="left:365.70px;top:276px;width:34.40px;font-size:6.8px;color:#123f58;transform:scaleX(1.0)">28</div>
<div class="gt" style="left:400.10px;top:276px;width:34.40px;font-size:6.8px;color:#123f58;transform:scaleX(1.0)">29</div>
<div class="gt" style="left:90.50px;top:287px;width:34.40px;font-size:6.8px;color:#123f58;transform:scaleX(1.0)">30</div>
<div class="gt" style="left:124.90px;top:287px;width:34.40px;font-size:6.8px;color:#123f58;transform:scaleX(1.0)">31</div>
<div class="gt wt" style="left:159.30px;top:287px;width:34.40px;font-size:6.8px;color:#a0a0a0;transform:scaleX(1.0)">32</div>
<div class="gt" style="left:193.70px;top:287px;width:34.40px;font-size:6.8px;color:#123f58;transform:scaleX(1.0)">33</div>
<div class="gt" style="left:228.10px;top:287px;width:34.40px;font-size:6.8px;color:#123f58;transform:scaleX(1.0)">34</div>
<div class="gt" style="left:262.50px;top:287px;width:34.40px;font-size:6.8px;color:#123f58;transform:scaleX(1.0)">35</div>
<div class="gt" style="left:296.90px;top:287px;width:34.40px;font-size:6.8px;color:#123f58;transform:scaleX(1.0)">36</div>
<div class="gt" style="left:331.30px;top:287px;width:34.40px;font-size:6.8px;color:#123f58;transform:scaleX(1.0)">37</div>
<div class="gt" style="left:365.70px;top:287px;width:34.40px;font-size:6.8px;color:#123f58;transform:scaleX(1.0)">38</div>
<div class="gt" style="left:400.10px;top:287px;width:34.40px;font-size:6.8px;color:#123f58;transform:scaleX(1.0)">39</div>
<div class="gt" style="left:90.50px;top:298px;width:34.40px;font-size:6.8px;color:#123f58;transform:scaleX(1.0)">40</div>
<div class="gt" style="left:124.90px;top:298px;width:34.40px;font-size:6.8px;color:#123f58;transform:scaleX(1.0)">41</div>
<div class="gt" style="left:159.30px;top:298px;width:34.40px;font-size:6.8px;color:#123f58;transform:scaleX(1.0)">42</div>
<div class="gt" style="left:193.70px;top:298px;width:34.40px;font-size:6.8px;color:#123f58;transform:scaleX(1.0)">43</div>
<div class="gt" style="left:228.10px;top:298px;width:34.40px;font-size:6.8px;color:#123f58;transform:scaleX(1.0)">44</div>
<div class="gt" style="left:262.50px;top:298px;width:34.40px;font-size:6.8px;color:#123f58;transform:scaleX(1.0)">45</div>
<div class="gt" style="left:296.90px;top:298px;width:34.40px;font-size:6.8px;color:#123f58;transform:scaleX(1.0)">46</div>
<div class="gt" style="left:331.30px;top:298px;width:34.40px;font-size:6.8px;color:#123f58;transform:scaleX(1.0)">47</div>
<div class="gt" style="left:365.70px;top:298px;width:34.40px;font-size:6.8px;color:#123f58;transform:scaleX(1.0)">48</div>
<div class="gt" style="left:400.10px;top:298px;width:34.40px;font-size:6.8px;color:#123f58;transform:scaleX(1.0)">49</div>
<div class="box" style="left:11px;top:326px;width:443px;height:132px"></div>
<div class="a" style="left:16px;top:324px;width:99px;height:5px;background:#fafafa"></div>
<svg class="a" style="left:20px;top:320.5px" width="7" height="10" viewBox="0 0 7 10"><path d="M1.6 0.6H5.0M2.1 0.6V5.2M4.5 0.6V5.2M0.3 5.5H6.3M3.3 5.5V8.6" stroke="#1a1a1a" stroke-width="1.1" fill="none"/><rect x="2.6" y="1" width="1.4" height="4" fill="#888"/></svg>
<div id="t44" class="t" style="left:38.50px;top:323.00px;font-size:7.56px;color:#222;font-weight:normal;transform:scaleX(0.9615);-webkit-text-stroke:0.2px #222;">PUCCH Transmission</div>
<div class="box" style="left:17px;top:342px;width:432px;height:110px"></div>
<div class="a" style="left:20px;top:340px;width:79px;height:5px;background:#fafafa"></div>
<div id="t45" class="t" style="left:22.10px;top:339.00px;font-size:7.56px;color:#222;font-weight:normal;transform:scaleX(1.0081);-webkit-text-stroke:0.2px #222;">System Frame Pattern</div>
<div id="t46" class="t" style="left:24.90px;top:355.00px;font-size:7.56px;color:#222;font-weight:normal;transform:scaleX(1.0123);-webkit-text-stroke:0.2px #222;">Repetition</div>
<div class="dd" style="left:95.2px;top:352.2px;width:55.7px;height:13.6px"></div>
<div id="t47" class="t" style="left:99.80px;top:356.00px;font-size:7.57px;color:#222;font-weight:normal;transform:scaleX(0.9871);-webkit-text-stroke:0.2px #222;">64</div>
<div class="arr" style="left:143px;top:357.6px"></div>
<div id="t48" class="t" style="left:24.90px;top:376.00px;font-size:7.56px;color:#222;font-weight:normal;transform:scaleX(1.0082);-webkit-text-stroke:0.2px #222;">Frame Selection</div>
<div id="t49" class="t" style="left:24.90px;top:416.00px;font-size:7.56px;color:#222;font-weight:normal;transform:scaleX(1.0188);-webkit-text-stroke:0.2px #222;">Subframe Selection</div>
<div class="gl" style="left:95px;top:368px;width:345px;height:21px"></div>
<div class="g" style="left:96.00px;top:369.00px;width:9.75px;height:9.00px"></div>
<div class="g" style="left:106.75px;top:369.00px;width:9.75px;height:9.00px"></div>
<div class="g" style="left:117.50px;top:369.00px;width:9.75px;height:9.00px"></div>
<div class="w" style="left:128.25px;top:368.00px;width:9.75px;height:10.00px"></div>
<div class="g" style="left:139.00px;top:369.00px;width:9.75px;height:9.00px"></div>
<div class="g" style="left:149.75px;top:369.00px;width:9.75px;height:9.00px"></div>
<div class="g" style="left:160.50px;top:369.00px;width:9.75px;height:9.00px"></div>
<div class="g" style="left:171.25px;top:369.00px;width:9.75px;height:9.00px"></div>
<div class="g" style="left:182.00px;top:369.00px;width:9.75px;height:9.00px"></div>
<div class="g" style="left:192.75px;top:369.00px;width:9.75px;height:9.00px"></div>
<div class="w" style="left:203.50px;top:368.00px;width:9.75px;height:10.00px"></div>
<div class="g" style="left:214.25px;top:369.00px;width:9.75px;height:9.00px"></div>
<div class="g" style="left:225.00px;top:369.00px;width:9.75px;height:9.00px"></div>
<div class="g" style="left:235.75px;top:369.00px;width:9.75px;height:9.00px"></div>
<div class="g" style="left:246.50px;top:369.00px;width:9.75px;height:9.00px"></div>
<div class="g" style="left:257.25px;top:369.00px;width:9.75px;height:9.00px"></div>
<div class="w" style="left:268.00px;top:368.00px;width:9.75px;height:10.00px"></div>
<div class="g" style="left:278.75px;top:369.00px;width:9.75px;height:9.00px"></div>
<div class="g" style="left:289.50px;top:369.00px;width:9.75px;height:9.00px"></div>
<div class="g" style="left:300.25px;top:369.00px;width:9.75px;height:9.00px"></div>
<div class="g" style="left:311.00px;top:369.00px;width:9.75px;height:9.00px"></div>
<div class="g" style="left:321.75px;top:369.00px;width:9.75px;height:9.00px"></div>
<div class="g" style="left:332.50px;top:369.00px;width:9.75px;height:9.00px"></div>
<div class="g" style="left:343.25px;top:369.00px;width:9.75px;height:9.00px"></div>
<div class="g" style="left:354.00px;top:369.00px;width:9.75px;height:9.00px"></div>
<div class="w" style="left:364.75px;top:368.00px;width:9.75px;height:10.00px"></div>
<div class="g" style="left:375.50px;top:369.00px;width:9.75px;height:9.00px"></div>
<div class="g" style="left:386.25px;top:369.00px;width:9.75px;height:9.00px"></div>
<div class="g" style="left:397.00px;top:369.00px;width:9.75px;height:9.00px"></div>
<div class="g" style="left:407.75px;top:369.00px;width:9.75px;height:9.00px"></div>
<div class="g" style="left:418.50px;top:369.00px;width:9.75px;height:9.00px"></div>
<div class="g" style="left:429.25px;top:369.00px;width:9.75px;height:9.00px"></div>
<div class="g" style="left:96.00px;top:379.00px;width:9.75px;height:9.00px"></div>
<div class="g" style="left:106.75px;top:379.00px;width:9.75px;height:9.00px"></div>
<div class="g" style="left:117.50px;top:379.00px;width:9.75px;height:9.00px"></div>
<div class="g" style="left:128.25px;top:379.00px;width:9.75px;height:9.00px"></div>
<div class="g" style="left:139.00px;top:379.00px;width:9.75px;height:9.00px"></div>
<div class="g" style="left:149.75px;top:379.00px;width:9.75px;height:9.00px"></div>
<div class="g" style="left:160.50px;top:379.00px;width:9.75px;height:9.00px"></div>
<div class="w" style="left:171.25px;top:379.00px;width:9.75px;height:10.00px"></div>
<div class="g" style="left:182.00px;top:379.00px;width:9.75px;height:9.00px"></div>
<div class="g" style="left:192.75px;top:379.00px;width:9.75px;height:9.00px"></div>
<div class="g" style="left:203.50px;top:379.00px;width:9.75px;height:9.00px"></div>
<div class="g" style="left:214.25px;top:379.00px;width:9.75px;height:9.00px"></div>
<div class="g" style="left:225.00px;top:379.00px;width:9.75px;height:9.00px"></div>
<div class="w" style="left:235.75px;top:379.00px;width:9.75px;height:10.00px"></div>
<div class="g" style="left:246.50px;top:379.00px;width:9.75px;height:9.00px"></div>
<div class="g" style="left:257.25px;top:379.00px;width:9.75px;height:9.00px"></div>
<div class="g" style="left:268.00px;top:379.00px;width:9.75px;height:9.00px"></div>
<div class="g" style="left:278.75px;top:379.00px;width:9.75px;height:9.00px"></div>
<div class="g" style="left:289.50px;top:379.00px;width:9.75px;height:9.00px"></div>
<div class="g" style="left:300.25px;top:379.00px;width:9.75px;height:9.00px"></div>
<div class="g" style="left:311.00px;top:379.00px;width:9.75px;height:9.00px"></div>
<div class="g" style="left:321.75px;top:379.00px;width:9.75px;height:9.00px"></div>
<div class="g" style="left:332.50px;top:379.00px;width:9.75px;height:9.00px"></div>
<div class="g" style="left:343.25px;top:379.00px;width:9.75px;height:9.00px"></div>
<div class="g" style="left:354.00px;top:379.00px;width:9.75px;height:9.00px"></div>
<div class="g" style="left:364.75px;top:379.00px;width:9.75px;height:9.00px"></div>
<div class="g" style="left:375.50px;top:379.00px;width:9.75px;height:9.00px"></div>
<div class="g" style="left:386.25px;top:379.00px;width:9.75px;height:9.00px"></div>
<div class="g" style="left:397.00px;top:379.00px;width:9.75px;height:9.00px"></div>
<div class="g" style="left:407.75px;top:379.00px;width:9.75px;height:9.00px"></div>
<div class="g" style="left:418.50px;top:379.00px;width:9.75px;height:9.00px"></div>
<div class="g" style="left:429.25px;top:379.00px;width:9.75px;height:9.00px"></div>
<div class="gt" style="left:95.50px;top:370px;width:10.75px;font-size:7.6px;color:#123f58;transform:scaleX(0.97)">0</div>
<div class="gt" style="left:106.25px;top:370px;width:10.75px;font-size:7.6px;color:#123f58;transform:scaleX(0.97)">1</div>
<div class="gt" style="left:117.00px;top:370px;width:10.75px;font-size:7.6px;color:#123f58;transform:scaleX(0.97)">2</div>
<div class="gt wt" style="left:127.75px;top:370px;width:10.75px;font-size:7.6px;color:#a0a0a0;transform:scaleX(0.97)">3</div>
<div class="gt" style="left:138.50px;top:370px;width:10.75px;font-size:7.6px;color:#123f58;transform:scaleX(0.97)">4</div>
<div class="gt" style="left:149.25px;top:370px;width:10.75px;font-size:7.6px;color:#123f58;transform:scaleX(0.97)">5</div>
<div class="gt" style="left:160.00px;top:370px;width:10.75px;font-size:7.6px;color:#123f58;transform:scaleX(0.97)">6</div>
<div class="gt" style="left:170.75px;top:370px;width:10.75px;font-size:7.6px;color:#123f58;transform:scaleX(0.97)">7</div>
<div class="gt" style="left:181.50px;top:370px;width:10.75px;font-size:7.6px;color:#123f58;transform:scaleX(0.97)">8</div>
<div class="gt" style="left:192.25px;top:370px;width:10.75px;font-size:7.6px;color:#123f58;transform:scaleX(0.97)">9</div>
<div class="gt wt" style="left:203.00px;top:370px;width:10.75px;font-size:7.6px;color:#a0a0a0;transform:scaleX(0.97)">10</div>
<div class="gt" style="left:213.75px;top:370px;width:10.75px;font-size:7.6px;color:#123f58;transform:scaleX(0.97)">11</div>
<div class="gt" style="left:224.50px;top:370px;width:10.75px;font-size:7.6px;color:#123f58;transform:scaleX(0.97)">12</div>
<div class="gt" style="left:235.25px;top:370px;width:10.75px;font-size:7.6px;color:#123f58;transform:scaleX(0.97)">13</div>
<div class="gt" style="left:246.00px;top:370px;width:10.75px;font-size:7.6px;color:#123f58;transform:scaleX(0.97)">14</div>
<div class="gt" style="left:256.75px;top:370px;width:10.75px;font-size:7.6px;color:#123f58;transform:scaleX(0.97)">15</div>
<div class="gt wt" style="left:267.50px;top:370px;width:10.75px;font-size:7.6px;color:#a0a0a0;transform:scaleX(0.97)">16</div>
<div class="gt" style="left:278.25px;top:370px;width:10.75px;font-size:7.6px;color:#123f58;transform:scaleX(0.97)">17</div>
<div class="gt" style="left:289.00px;top:370px;width:10.75px;font-size:7.6px;color:#123f58;transform:scaleX(0.97)">18</div>
<div class="gt" style="left:299.75px;top:370px;width:10.75px;font-size:7.6px;color:#123f58;transform:scaleX(0.97)">19</div>
<div class="gt" style="left:310.50px;top:370px;width:10.75px;font-size:7.6px;color:#123f58;transform:scaleX(0.97)">20</div>
<div class="gt" style="left:321.25px;top:370px;width:10.75px;font-size:7.6px;color:#123f58;transform:scaleX(0.97)">21</div>
<div class="gt" style="left:332.00px;top:370px;width:10.75px;font-size:7.6px;color:#123f58;transform:scaleX(0.97)">22</div>
<div class="gt" style="left:342.75px;top:370px;width:10.75px;font-size:7.6px;color:#123f58;transform:scaleX(0.97)">23</div>
<div class="gt" style="left:353.50px;top:370px;width:10.75px;font-size:7.6px;color:#123f58;transform:scaleX(0.97)">24</div>
<div class="gt wt" style="left:364.25px;top:370px;width:10.75px;font-size:7.6px;color:#a0a0a0;transform:scaleX(0.97)">25</div>
<div class="gt" style="left:375.00px;top:370px;width:10.75px;font-size:7.6px;color:#123f58;transform:scaleX(0.97)">26</div>
<div class="gt" style="left:385.75px;top:370px;width:10.75px;font-size:7.6px;color:#123f58;transform:scaleX(0.97)">27</div>
<div class="gt" style="left:396.50px;top:370px;width:10.75px;font-size:7.6px;color:#123f58;transform:scaleX(0.97)">28</div>
<div class="gt" style="left:407.25px;top:370px;width:10.75px;font-size:7.6px;color:#123f58;transform:scaleX(0.97)">29</div>
<div class="gt" style="left:418.00px;top:370px;width:10.75px;font-size:7.6px;color:#123f58;transform:scaleX(0.97)">30</div>
<div class="gt" style="left:428.75px;top:370px;width:10.75px;font-size:7.6px;color:#123f58;transform:scaleX(0.97)">31</div>
<div class="gt" style="left:95.50px;top:380px;width:10.75px;font-size:7.6px;color:#123f58;transform:scaleX(0.97)">32</div>
<div class="gt" style="left:106.25px;top:380px;width:10.75px;font-size:7.6px;color:#123f58;transform:scaleX(0.97)">33</div>
<div class="gt" style="left:117.00px;top:380px;width:10.75px;font-size:7.6px;color:#123f58;transform:scaleX(0.97)">34</div>
<div class="gt" style="left:127.75px;top:380px;width:10.75px;font-size:7.6px;color:#123f58;transform:scaleX(0.97)">35</div>
<div class="gt" style="left:138.50px;top:380px;width:10.75px;font-size:7.6px;color:#123f58;transform:scaleX(0.97)">36</div>
<div class="gt" style="left:149.25px;top:380px;width:10.75px;font-size:7.6px;color:#123f58;transform:scaleX(0.97)">37</div>
<div class="gt" style="left:160.00px;top:380px;width:10.75px;font-size:7.6px;color:#123f58;transform:scaleX(0.97)">38</div>
<div class="gt wt" style="left:170.75px;top:380px;width:10.75px;font-size:7.6px;color:#a0a0a0;transform:scaleX(0.97)">39</div>
<div class="gt" style="left:181.50px;top:380px;width:10.75px;font-size:7.6px;color:#123f58;transform:scaleX(0.97)">40</div>
<div class="gt" style="left:192.25px;top:380px;width:10.75px;font-size:7.6px;color:#123f58;transform:scaleX(0.97)">41</div>
<div class="gt" style="left:203.00px;top:380px;width:10.75px;font-size:7.6px;color:#123f58;transform:scaleX(0.97)">42</div>
<div class="gt" style="left:213.75px;top:380px;width:10.75px;font-size:7.6px;color:#123f58;transform:scaleX(0.97)">43</div>
<div class="gt" style="left:224.50px;top:380px;width:10.75px;font-size:7.6px;color:#123f58;transform:scaleX(0.97)">44</div>
<div class="gt wt" style="left:235.25px;top:380px;width:10.75px;font-size:7.6px;color:#a0a0a0;transform:scaleX(0.97)">45</div>
<div class="gt" style="left:246.00px;top:380px;width:10.75px;font-size:7.6px;color:#123f58;transform:scaleX(0.97)">46</div>
<div class="gt" style="left:256.75px;top:380px;width:10.75px;font-size:7.6px;color:#123f58;transform:scaleX(0.97)">47</div>
<div class="gt" style="left:267.50px;top:380px;width:10.75px;font-size:7.6px;color:#123f58;transform:scaleX(0.97)">48</div>
<div class="gt" style="left:278.25px;top:380px;width:10.75px;font-size:7.6px;color:#123f58;transform:scaleX(0.97)">49</div>
<div class="gt" style="left:289.00px;top:380px;width:10.75px;font-size:7.6px;color:#123f58;transform:scaleX(0.97)">50</div>
<div class="gt" style="left:299.75px;top:380px;width:10.75px;font-size:7.6px;color:#123f58;transform:scaleX(0.97)">51</div>
<div class="gt" style="left:310.50px;top:380px;width:10.75px;font-size:7.6px;color:#123f58;transform:scaleX(0.97)">52</div>
<div class="gt" style="left:321.25px;top:380px;width:10.75px;font-size:7.6px;color:#123f58;transform:scaleX(0.97)">53</div>
<div class="gt" style="left:332.00px;top:380px;width:10.75px;font-size:7.6px;color:#123f58;transform:scaleX(0.97)">54</div>
<div class="gt" style="left:342.75px;top:380px;width:10.75px;font-size:7.6px;color:#123f58;transform:scaleX(0.97)">55</div>
<div class="gt" style="left:353.50px;top:380px;width:10.75px;font-size:7.6px;color:#123f58;transform:scaleX(0.97)">56</div>
<div class="gt" style="left:364.25px;top:380px;width:10.75px;font-size:7.6px;color:#123f58;transform:scaleX(0.97)">57</div>
<div class="gt" style="left:375.00px;top:380px;width:10.75px;font-size:7.6px;color:#123f58;transform:scaleX(0.97)">58</div>
<div class="gt" style="left:385.75px;top:380px;width:10.75px;font-size:7.6px;color:#123f58;transform:scaleX(0.97)">59</div>
<div class="gt" style="left:396.50px;top:380px;width:10.75px;font-size:7.6px;color:#123f58;transform:scaleX(0.97)">60</div>
<div class="gt" style="left:407.25px;top:380px;width:10.75px;font-size:7.6px;color:#123f58;transform:scaleX(0.97)">61</div>
<div class="gt" style="left:418.00px;top:380px;width:10.75px;font-size:7.6px;color:#123f58;transform:scaleX(0.97)">62</div>
<div class="gt" style="left:428.75px;top:380px;width:10.75px;font-size:7.6px;color:#123f58;transform:scaleX(0.97)">63</div>
<div class="gl" style="left:95px;top:392px;width:345px;height:54px"></div>
<div class="g" style="left:96.00px;top:393.00px;width:33.40px;height:9.60px"></div>
<div class="g" style="left:130.40px;top:393.00px;width:33.40px;height:9.60px"></div>
<div class="g" style="left:164.80px;top:393.00px;width:33.40px;height:9.60px"></div>
<div class="g" style="left:199.20px;top:393.00px;width:33.40px;height:9.60px"></div>
<div class="g" style="left:233.60px;top:393.00px;width:33.40px;height:9.60px"></div>
<div class="g" style="left:268.00px;top:393.00px;width:33.40px;height:9.60px"></div>
<div class="g" style="left:302.40px;top:393.00px;width:33.40px;height:9.60px"></div>
<div class="g" style="left:336.80px;top:393.00px;width:33.40px;height:9.60px"></div>
<div class="g" style="left:371.20px;top:393.00px;width:33.40px;height:9.60px"></div>
<div class="g" style="left:405.60px;top:393.00px;width:33.40px;height:9.60px"></div>
<div class="g" style="left:96.00px;top:403.60px;width:33.40px;height:9.60px"></div>
<div class="g" style="left:130.40px;top:403.60px;width:33.40px;height:9.60px"></div>
<div class="g" style="left:164.80px;top:403.60px;width:33.40px;height:9.60px"></div>
<div class="g" style="left:199.20px;top:403.60px;width:33.40px;height:9.60px"></div>
<div class="g" style="left:233.60px;top:403.60px;width:33.40px;height:9.60px"></div>
<div class="w" style="left:268.00px;top:403.60px;width:33.40px;height:9.60px"></div>
<div class="g" style="left:302.40px;top:403.60px;width:33.40px;height:9.60px"></div>
<div class="w" style="left:336.80px;top:403.60px;width:33.40px;height:9.60px"></div>
<div class="g" style="left:371.20px;top:403.60px;width:33.40px;height:9.60px"></div>
<div class="g" style="left:405.60px;top:403.60px;width:33.40px;height:9.60px"></div>
<div class="w" style="left:95.00px;top:414.20px;width:34.40px;height:9.60px"></div>
<div class="g" style="left:130.40px;top:414.20px;width:33.40px;height:9.60px"></div>
<div class="g" style="left:164.80px;top:414.20px;width:33.40px;height:9.60px"></div>
<div class="w" style="left:199.20px;top:414.20px;width:33.40px;height:9.60px"></div>
<div class="g" style="left:233.60px;top:414.20px;width:33.40px;height:9.60px"></div>
<div class="g" style="left:268.00px;top:414.20px;width:33.40px;height:9.60px"></div>
<div class="g" style="left:302.40px;top:414.20px;width:33.40px;height:9.60px"></div>
<div class="g" style="left:336.80px;top:414.20px;width:33.40px;height:9.60px"></div>
<div class="g" style="left:371.20px;top:414.20px;width:33.40px;height:9.60px"></div>
<div class="g" style="left:405.60px;top:414.20px;width:33.40px;height:9.60px"></div>
<div class="g" style="left:96.00px;top:424.80px;width:33.40px;height:9.60px"></div>
<div class="g" style="left:130.40px;top:424.80px;width:33.40px;height:9.60px"></div>
<div class="g" style="left:164.80px;top:424.80px;width:33.40px;height:9.60px"></div>
<div class="g" style="left:199.20px;top:424.80px;width:33.40px;height:9.60px"></div>
<div class="g" style="left:233.60px;top:424.80px;width:33.40px;height:9.60px"></div>
<div class="g" style="left:268.00px;top:424.80px;width:33.40px;height:9.60px"></div>
<div class="g" style="left:302.40px;top:424.80px;width:33.40px;height:9.60px"></div>
<div class="w" style="left:336.80px;top:424.80px;width:33.40px;height:9.60px"></div>
<div class="g" style="left:371.20px;top:424.80px;width:33.40px;height:9.60px"></div>
<div class="g" style="left:405.60px;top:424.80px;width:33.40px;height:9.60px"></div>
<div class="g" style="left:96.00px;top:435.40px;width:33.40px;height:9.60px"></div>
<div class="g" style="left:130.40px;top:435.40px;width:33.40px;height:9.60px"></div>
<div class="g" style="left:164.80px;top:435.40px;width:33.40px;height:9.60px"></div>
<div class="g" style="left:199.20px;top:435.40px;width:33.40px;height:9.60px"></div>
<div class="g" style="left:233.60px;top:435.40px;width:33.40px;height:9.60px"></div>
<div class="g" style="left:268.00px;top:435.40px;width:33.40px;height:9.60px"></div>
<div class="g" style="left:302.40px;top:435.40px;width:33.40px;height:9.60px"></div>
<div class="g" style="left:336.80px;top:435.40px;width:33.40px;height:9.60px"></div>
<div class="g" style="left:371.20px;top:435.40px;width:33.40px;height:9.60px"></div>
<div class="g" style="left:405.60px;top:435.40px;width:33.40px;height:9.60px"></div>
<div class="gt" style="left:95.50px;top:395px;width:34.40px;font-size:6.8px;color:#123f58;transform:scaleX(1.0)">0</div>
<div class="gt" style="left:129.90px;top:395px;width:34.40px;font-size:6.8px;color:#123f58;transform:scaleX(1.0)">1</div>
<div class="gt" style="left:164.30px;top:395px;width:34.40px;font-size:6.8px;color:#123f58;transform:scaleX(1.0)">2</div>
<div class="gt" style="left:198.70px;top:395px;width:34.40px;font-size:6.8px;color:#123f58;transform:scaleX(1.0)">3</div>
<div class="gt" style="left:233.10px;top:395px;width:34.40px;font-size:6.8px;color:#123f58;transform:scaleX(1.0)">4</div>
<div class="gt" style="left:267.50px;top:395px;width:34.40px;font-size:6.8px;color:#123f58;transform:scaleX(1.0)">5</div>
<div class="gt" style="left:301.90px;top:395px;width:34.40px;font-size:6.8px;color:#123f58;transform:scaleX(1.0)">6</div>
<div class="gt" style="left:336.30px;top:395px;width:34.40px;font-size:6.8px;color:#123f58;transform:scaleX(1.0)">7</div>
<div class="gt" style="left:370.70px;top:395px;width:34.40px;font-size:6.8px;color:#123f58;transform:scaleX(1.0)">8</div>
<div class="gt" style="left:405.10px;top:395px;width:34.40px;font-size:6.8px;color:#123f58;transform:scaleX(1.0)">9</div>
<div class="gt" style="left:95.50px;top:406px;width:34.40px;font-size:6.8px;color:#123f58;transform:scaleX(1.0)">10</div>
<div class="gt" style="left:129.90px;top:406px;width:34.40px;font-size:6.8px;color:#123f58;transform:scaleX(1.0)">11</div>
<div class="gt" style="left:164.30px;top:406px;width:34.40px;font-size:6.8px;color:#123f58;transform:scaleX(1.0)">12</div>
<div class="gt" style="left:198.70px;top:406px;width:34.40px;font-size:6.8px;color:#123f58;transform:scaleX(1.0)">13</div>
<div class="gt" style="left:233.10px;top:406px;width:34.40px;font-size:6.8px;color:#123f58;transform:scaleX(1.0)">14</div>
<div class="gt wt" style="left:267.50px;top:406px;width:34.40px;font-size:6.8px;color:#a0a0a0;transform:scaleX(1.0)">15</div>
<div class="gt" style="left:301.90px;top:406px;width:34.40px;font-size:6.8px;color:#123f58;transform:scaleX(1.0)">16</div>
<div class="gt wt" style="left:336.30px;top:406px;width:34.40px;font-size:6.8px;color:#a0a0a0;transform:scaleX(1.0)">17</div>
<div class="gt" style="left:370.70px;top:406px;width:34.40px;font-size:6.8px;color:#123f58;transform:scaleX(1.0)">18</div>
<div class="gt" style="left:405.10px;top:406px;width:34.40px;font-size:6.8px;color:#123f58;transform:scaleX(1.0)">19</div>
<div class="gt wt" style="left:95.50px;top:416px;width:34.40px;font-size:6.8px;color:#a0a0a0;transform:scaleX(1.0)">20</div>
<div class="gt" style="left:129.90px;top:416px;width:34.40px;font-size:6.8px;color:#123f58;transform:scaleX(1.0)">21</div>
<div class="gt" style="left:164.30px;top:416px;width:34.40px;font-size:6.8px;color:#123f58;transform:scaleX(1.0)">22</div>
<div class="gt wt" style="left:198.70px;top:416px;width:34.40px;font-size:6.8px;color:#a0a0a0;transform:scaleX(1.0)">23</div>
<div class="gt" style="left:233.10px;top:416px;width:34.40px;font-size:6.8px;color:#123f58;transform:scaleX(1.0)">24</div>
<div class="gt" style="left:267.50px;top:416px;width:34.40px;font-size:6.8px;color:#123f58;transform:scaleX(1.0)">25</div>
<div class="gt" style="left:301.90px;top:416px;width:34.40px;font-size:6.8px;color:#123f58;transform:scaleX(1.0)">26</div>
<div class="gt" style="left:336.30px;top:416px;width:34.40px;font-size:6.8px;color:#123f58;transform:scaleX(1.0)">27</div>
<div class="gt" style="left:370.70px;top:416px;width:34.40px;font-size:6.8px;color:#123f58;transform:scaleX(1.0)">28</div>
<div class="gt" style="left:405.10px;top:416px;width:34.40px;font-size:6.8px;color:#123f58;transform:scaleX(1.0)">29</div>
<div class="gt" style="left:95.50px;top:427px;width:34.40px;font-size:6.8px;color:#123f58;transform:scaleX(1.0)">30</div>
<div class="gt" style="left:129.90px;top:427px;width:34.40px;font-size:6.8px;color:#123f58;transform:scaleX(1.0)">31</div>
<div class="gt" style="left:164.30px;top:427px;width:34.40px;font-size:6.8px;color:#123f58;transform:scaleX(1.0)">32</div>
<div class="gt" style="left:198.70px;top:427px;width:34.40px;font-size:6.8px;color:#123f58;transform:scaleX(1.0)">33</div>
<div class="gt" style="left:233.10px;top:427px;width:34.40px;font-size:6.8px;color:#123f58;transform:scaleX(1.0)">34</div>
<div class="gt" style="left:267.50px;top:427px;width:34.40px;font-size:6.8px;color:#123f58;transform:scaleX(1.0)">35</div>
<div class="gt" style="left:301.90px;top:427px;width:34.40px;font-size:6.8px;color:#123f58;transform:scaleX(1.0)">36</div>
<div class="gt wt" style="left:336.30px;top:427px;width:34.40px;font-size:6.8px;color:#a0a0a0;transform:scaleX(1.0)">37</div>
<div class="gt" style="left:370.70px;top:427px;width:34.40px;font-size:6.8px;color:#123f58;transform:scaleX(1.0)">38</div>
<div class="gt" style="left:405.10px;top:427px;width:34.40px;font-size:6.8px;color:#123f58;transform:scaleX(1.0)">39</div>
<div class="gt" style="left:95.50px;top:438px;width:34.40px;font-size:6.8px;color:#123f58;transform:scaleX(1.0)">40</div>
<div class="gt" style="left:129.90px;top:438px;width:34.40px;font-size:6.8px;color:#123f58;transform:scaleX(1.0)">41</div>
<div class="gt" style="left:164.30px;top:438px;width:34.40px;font-size:6.8px;color:#123f58;transform:scaleX(1.0)">42</div>
<div class="gt" style="left:198.70px;top:438px;width:34.40px;font-size:6.8px;color:#123f58;transform:scaleX(1.0)">43</div>
<div class="gt" style="left:233.10px;top:438px;width:34.40px;font-size:6.8px;color:#123f58;transform:scaleX(1.0)">44</div>
<div class="gt" style="left:267.50px;top:438px;width:34.40px;font-size:6.8px;color:#123f58;transform:scaleX(1.0)">45</div>
<div class="gt" style="left:301.90px;top:438px;width:34.40px;font-size:6.8px;color:#123f58;transform:scaleX(1.0)">46</div>
<div class="gt" style="left:336.30px;top:438px;width:34.40px;font-size:6.8px;color:#123f58;transform:scaleX(1.0)">47</div>
<div class="gt" style="left:370.70px;top:438px;width:34.40px;font-size:6.8px;color:#123f58;transform:scaleX(1.0)">48</div>
<div class="gt" style="left:405.10px;top:438px;width:34.40px;font-size:6.8px;color:#123f58;transform:scaleX(1.0)">49</div>
<div id="t50" class="t" style="left:636.70px;top:84.00px;font-size:6.69px;color:#222;font-weight:normal;transform:scaleX(1.1823);-webkit-text-stroke:0.1px #222;">My</div>
<div id="t51" class="t" style="left:636.70px;top:92.00px;font-size:6.98px;color:#222;font-weight:normal;transform:scaleX(1.0083);-webkit-text-stroke:0.1px #222;">Dashboard</div>
<div class="a" style="left:633.2px;top:109px;width:39.5px;height:33px;background:#ededed"></div>
<div id="t52" class="t" style="left:641.70px;top:122.00px;font-size:7.27px;color:#5a5a5a;font-weight:normal;transform:scaleX(0.9904);-webkit-text-stroke:0.1px #5a5a5a;">System</div>
<div class="a" style="left:633.2px;top:143px;width:39.5px;height:33px;background:#ededed"></div>
<div id="t53" class="t" style="left:647.40px;top:156.00px;font-size:7.27px;color:#5a5a5a;font-weight:normal;transform:scaleX(0.9007);-webkit-text-stroke:0.1px #5a5a5a;">Cell</div>
<div class="a" style="left:633.2px;top:177px;width:39.5px;height:33px;background:#ededed"></div>
<div id="t54" class="t" style="left:647.60px;top:190.00px;font-size:7.27px;color:#5a5a5a;font-weight:normal;transform:scaleX(0.7697);-webkit-text-stroke:0.1px #5a5a5a;">PHY</div>
<div class="a" style="left:633.2px;top:211px;width:39.5px;height:33px;background:#ededed"></div>
<div id="t55" class="t" style="left:635.80px;top:224.00px;font-size:7.27px;color:#5a5a5a;font-weight:normal;transform:scaleX(0.9793);-webkit-text-stroke:0.1px #5a5a5a;">Scheduling</div>
<div class="a" style="left:633.2px;top:245px;width:39.5px;height:33px;background:#ededed"></div>
<div id="t56" class="t" style="left:638.00px;top:258.00px;font-size:7.27px;color:#5a5a5a;font-weight:normal;transform:scaleX(0.9871);-webkit-text-stroke:0.1px #5a5a5a;">Data Gen</div>
<div class="a" style="left:4px;top:478px;width:64px;height:18px;background:#fefefe"></div>
<div id="t57" class="t" style="left:10.60px;top:485.00px;font-size:7.56px;color:#222;font-weight:normal;transform:scaleX(1.0475);-webkit-text-stroke:0.2px #222;">My Dashboard</div>
<div class="a" style="left:634.9px;top:482.2px;width:37.8px;height:13px;background:linear-gradient(#e8e8e8,#cdcdcd);border:1px solid #e2e2e2"></div>
<div id="t58" class="t" style="left:644.00px;top:486.00px;font-size:6.98px;color:#222;font-weight:normal;transform:scaleX(1.0698);-webkit-text-stroke:0.2px #222;">Apply</div>
<div class="a" style="left:4px;top:500px;width:672px;height:34px;background:linear-gradient(#f8f8f8 0,#e6e6e6 3px,#d2d2d2 8px,#d9d9d9 15px,#e6e6e6 24px,#f2f2f2 31px,#fbfbfb 33px);border-top:1px solid #a9a9a9;border-radius:9px 9px 0 0"></div>
<div class="a" style="left:19.9px;top:511.2px;width:13.8px;height:14px;border-radius:50%;background:radial-gradient(circle at 45% 35%,#a8e39c,#3f9a35 60%,#1d5a1a);border:1px solid #1f3f1c"></div>
<div id="t59" class="t" style="left:37.20px;top:515.00px;font-size:8.14px;color:#222;font-weight:normal;transform:scaleX(0.9569);-webkit-text-stroke:0.2px #222;">Cell Active, Frequency 2140</div>
<div id="t60" class="t" style="left:255.90px;top:515.00px;font-size:8.14px;color:#111;font-weight:bold;transform:scaleX(0.9576);-webkit-text-stroke:0.1px #111;">Network connected - Live Configuration possible</div>
</body></html>
